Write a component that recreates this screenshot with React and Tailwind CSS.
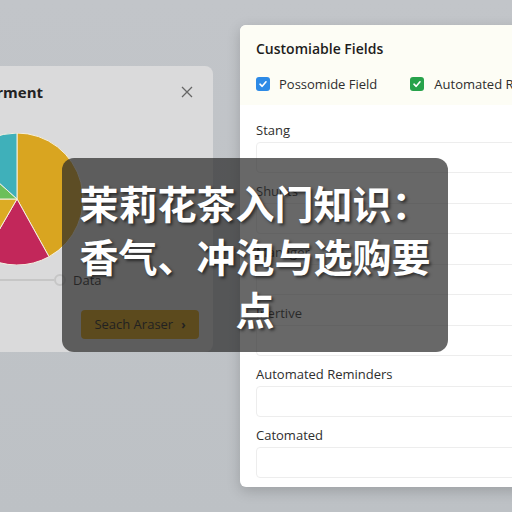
import React from "react";

const slices = [
  { from: 0, to: 151, color: "#d9a520" },
  { from: 151, to: 210, color: "#c2275a" },
  { from: 210, to: 270, color: "#dcab24" },
  { from: 270, to: 312, color: "#6cbf5a" },
  { from: 312, to: 360, color: "#3fb0ba" },
];

const point = (r, deg) => {
  const a = (deg * Math.PI) / 180;
  return [r + r * Math.sin(a), r - r * Math.cos(a)];
};

const PieChart = ({ size = 132 }) => {
  const r = size / 2;
  return (
    <svg width={size} height={size} viewBox={`0 0 ${size} ${size}`}>
      {slices.map((s) => {
        const [x1, y1] = point(r, s.from);
        const [x2, y2] = point(r, s.to);
        const large = s.to - s.from > 180 ? 1 : 0;
        return (
          <path
            key={s.from}
            d={`M${r} ${r} L${x1} ${y1} A${r} ${r} 0 ${large} 1 ${x2} ${y2} Z`}
            fill={s.color}
            stroke="#f4efe0"
            strokeWidth="1"
          />
        );
      })}
    </svg>
  );
};

const fields = ["Stang", "Shunts", "Manager", "Inertive", "Automated Reminders", "Catomated"];

const CheckIcon = ({ color }) => (
  <span className={`flex h-[14px] w-[14px] shrink-0 items-center justify-center rounded-[3px] ${color}`}>
    <svg width="10" height="10" viewBox="0 0 10 10" fill="none">
      <path d="M2 5.2 L4.2 7.3 L8 2.8" stroke="white" strokeWidth="1.6" strokeLinecap="round" strokeLinejoin="round" />
    </svg>
  </span>
);

export default function App() {
  return (
    <div
      className="relative h-[512px] w-[512px] overflow-hidden bg-gradient-to-b from-[#c2c5c9] to-[#bdc1c5]"
      style={{ fontFamily: "'Open Sans', Lato, sans-serif" }}
    >
      <div className="flex items-start">
        {/* chart panel, partly off the left edge */}
        <div className="-ml-[92px] mt-[66px] flex h-[286px] w-[305px] shrink-0 flex-col rounded-lg bg-[#dadadb] pl-[20px] pr-[18px]">
          <div className="mt-[15px] flex items-center justify-between">
            <span className="-ml-[6px] text-[15px] font-bold text-[#222]">Data Deferment</span>
            <svg width="14" height="14" viewBox="0 0 14 14" className="mr-[1px]">
              <path d="M2 2 L12 12 M12 2 L2 12" stroke="#666" strokeWidth="1.3" />
            </svg>
          </div>
          <div className="ml-[23px] mt-[29px]">
            <PieChart />
          </div>
          <div className="mt-[6px] flex items-center">
            <div className="h-[2px] w-[126px] bg-[#c6c6c6]" />
            <div className="h-[12px] w-[12px] rounded-full border-2 border-[#c6c6c6] bg-[#dadadb]" />
            <span className="ml-[7px] text-[13px] text-[#222]">Data</span>
          </div>
          <button className="ml-[153px] mt-[20px] flex h-[29px] w-[118px] items-center justify-center gap-2 rounded-[4px] bg-[#d59a05] text-[13px] text-[#111]">
            Seach Araser <span className="text-[12px] font-bold">›</span>
          </button>
        </div>

        {/* form panel */}
        <div className="ml-[27px] mt-[25px] h-[462px] w-[300px] shrink-0 overflow-hidden rounded-md bg-white shadow-[0_4px_14px_rgba(0,0,0,0.18)]">
          <div className="bg-[#fdfdf5] pb-[12px] pl-[16px] pt-[14px]">
            <div className="text-[14px] font-semibold leading-[20px] text-[#1d1d1d]">Customiable Fields</div>
            <div className="mt-[16px] flex items-center whitespace-nowrap text-[13px] leading-[18px] text-[#2e2e2e]">
              <CheckIcon color="bg-[#2d8ae6]" />
              <span className="ml-[9px]">Possomide Field</span>
              <span className="ml-[33px]">
                <CheckIcon color="bg-[#27a24a]" />
              </span>
              <span className="ml-[10px]">Automated Reminders</span>
            </div>
          </div>
          <div className="flex flex-col pl-[16px] pt-[17px]">
            {fields.map((f) => (
              <div key={f} className="mb-[10px] flex flex-col">
                <span className="text-[13px] leading-[16px] text-[#2e2e2e]">{f}</span>
                <div className="mt-[4px] h-[31px] w-[290px] rounded-[4px] border border-[#ededed]" />
              </div>
            ))}
          </div>
        </div>
      </div>

      {/* title banner laid over the panels */}
      <div className="absolute left-[62px] top-[158px] flex h-[194px] w-[386px] items-center justify-center rounded-xl bg-[rgba(40,40,40,0.7)] px-[14px]">
        <h1
          className="text-center text-[39px] font-bold leading-[53px] text-white [text-shadow:2px_2px_3px_rgba(0,0,0,0.55)]"
          style={{ fontFamily: "'Noto Sans CJK SC', 'Noto Sans', sans-serif" }}
        >
          茉莉花茶入门知识：香气、冲泡与选购要点
        </h1>
      </div>
    </div>
  );
}
